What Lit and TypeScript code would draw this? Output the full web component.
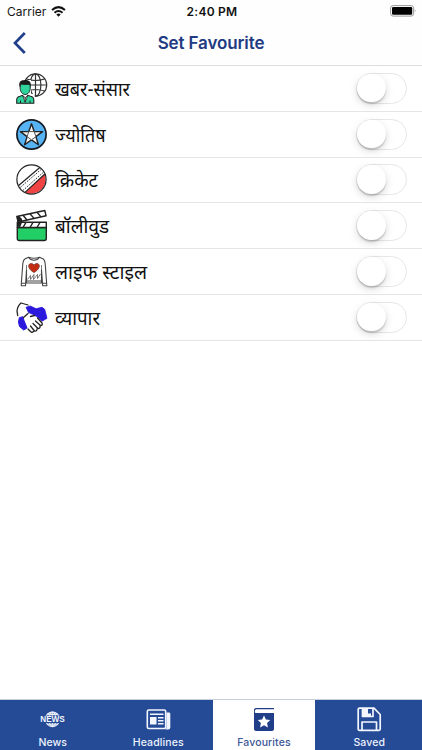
import { LitElement, html, css, svg } from "lit";
import { customElement, property } from "lit/decorators.js";

const globe = svg`
  <g fill="none" stroke="#333" stroke-width="1.2">
    <circle cx="19.5" cy="12" r="11.200"/>
    <ellipse cx="19.5" cy="12" rx="5.4" ry="11.200"/>
    <path d="M19.5 1v22M8.5 12h22M10.5 6q9 3 18 0M10.5 18q9-3 18 0"/>
  </g>
  <path d="M2.500 7h12.500v14h3.500l1 10H0V22z" fill="#fff"/>
  <path d="M4.200 11v4.500c0 3 2.200 6 5 6s5-3 5-6V11z" fill="#2fd39c" stroke="#222" stroke-width="1"/>
  <path d="M3.600 14c-1-4.500.4-6.800 3.900-6.800 4.200-1 8.200.4 7.200 6.800l-1.200-2.200c-3 .2-6-.2-8.500-.6z" fill="#1c1c1c"/>
  <path d="M.7 30.300V27q0-3 3.300-3.700L6.500 22.300l2.700 3 2.700-3 2.600 1q3.300.7 3.300 3.700v3.300z" fill="#2fd39c" stroke="#222" stroke-width="1.100"/>
  <path d="M6.900 23L9.200 29.500l2.300-6.500-2.300 1.800z" fill="#fff" stroke="#222" stroke-width=".7"/>
  <path d="M4.500 27.500v2.500M14 27.500v2.500M9.200 25v4" stroke="#222" fill="none"/>`;

const star = svg`
  <circle cx="15.500" cy="15.500" r="14.600" fill="#56b4f5" stroke="#141a22" stroke-width="1.700"/>
  <path d="M15.500 4.800L18.200 12.600H26.600L19.900 17.600 22.400 25.800 15.500 20.900 8.600 25.800 11.100 17.600 4.400 12.600H12.800z" fill="#f4f4f4" stroke="#222" stroke-width="1.400" stroke-linejoin="round"/>
  <path d="M12.800 12.600h5.400l1.700 5-4.400 3.300-4.400-3.300z" fill="#fff" stroke="#444" stroke-width=".9"/>`;

const ball = svg`
  <circle cx="15.500" cy="15.500" r="14.600" fill="#fff"/>
  <path d="M28.800 10A14.600 14.600 0 0 1 9 28.400z" fill="#f04343"/>
  <g fill="none" stroke="#222" stroke-width="1.200">
    <circle cx="15.500" cy="15.500" r="14.600"/>
    <path d="M23.800 3.500L2.300 21.800M28.900 10L9 28.400"/>
    <path d="M25.400 5.200L3.600 24M27.500 8.200L6.500 26.800" stroke-dasharray="1.700 1.200" stroke-width=".9"/>
  </g>`;

const clapper = svg`
  <g stroke="#222" stroke-width="1.400" stroke-linejoin="round">
    <path d="M1.300 17.500h29v11q0 2-2 2h-25q-2 0-2-2z" fill="#22cf66"/>
    <path d="M1.300 12.300h29v5.200h-29z" fill="#fff"/>
    <path d="M.8 6.500L28.800.5l1.300 5.300L2.200 12z" fill="#fff"/>
    <path d="M7 5.200l4 4.800M14 3.700l4 4.700M21 2.200l4 4.700M10 12.300l-3 5.200M17 12.300l-3 5.200M24 12.300l-3 5.200" fill="none"/>
  </g>
  <path d="M1 6.500L2.200 17h2l2-4.700L6 9 3 6z" fill="#222"/>`;

const sweater = svg`
  <g stroke="#444" stroke-width="1.100" stroke-linejoin="round" fill="#fff">
    <path d="M12.500 1.200L8.800 3Q7 4.300 6.700 9L5.300 28v1.800h4.200L10.500 14v13h15V14l1.200 15.800h4.100L29.300 9Q29 4.300 27.300 3L23.500 1.200q-5.500 2-11 0z"/>
    <path d="M12.500 1.200q2 3 5.500 3t5.500-3M5.300 27.300h4M26.700 27.300h4M10.500 25h15" fill="none"/>
    <path d="M10.500 14V9M25.500 14V9M11.500 23.500l3-4v4l3.500-5-.5 5 4-5v4l3-4.500" fill="none" stroke-width=".7"/>
  </g>
  <path d="M18 16.600C10.800 12.200 12 7.500 15.200 7.500q2 0 2.800 1.700.8-1.700 2.800-1.700c3.200 0 4.400 4.700-2.800 9.100z" fill="#c52d12" stroke="#74362f" stroke-width=".8"/>`;

const hands = svg`
  <path d="M10 5.300L14.300 4 20 6.700 26 5.300l2.700 2L31 16.300 26 19.200 21 14.700 16.700 12.300 12.500 10.500z" fill="#2a18dc" stroke="#2a18dc" stroke-width=".8" stroke-linejoin="round"/>
  <path d="M3.300 15.700L6.700 14.700 8 18.500 11 26 7.700 28 3.500 24.500 2.500 20z" fill="#2a18dc" stroke="#2a18dc" stroke-linejoin="round"/>
  <g fill="none" stroke="#222" stroke-width="1.300" stroke-linecap="round" stroke-linejoin="round">
    <path d="M1.700 13.500L1 9q.5-5 4-8L12 3"/>
    <path d="M7.500 15.500L12 11.500M14.500 14.500l4-1M21.500 16l4.500 5q1 2.500-1.500 2.500L19.500 19M24 24q.5 2.500-2 2.500l-5-5M21 27q0 2.500-2.500 2l-4-5M17.500 29.500q-1.500 1.500-3 0L12 27"/>
  </g>`;

const rows = [
  { label: "खबर-संसार", icon: globe, width: 75 },
  { label: "ज्योतिष", icon: star, width: 50.5 },
  { label: "क्रिकेट", icon: ball, width: 43 },
  { label: "बॉलीवुड", icon: clapper, width: 54 },
  { label: "लाइफ स्टाइल", icon: sweater, width: 92 },
  { label: "व्यापार", icon: hands, width: 45 },
];

const newsIcon = svg`
  <g fill="none" stroke="#e5ebf8" stroke-width="1.300">
    <circle cx="12.500" cy="12.300" r="7.200"/>
    <ellipse cx="12.500" cy="12.300" rx="3.500" ry="7.200"/>
    <path d="M12.500 5v14.500M7 7.500h11M7 17.200h11"/>
  </g>
  <path d="M0 8.700h25v7.400H0z" fill="#254b96"/>
  <text x="12.500" y="15.300" text-anchor="middle" fill="#f3f6ff" font-family="Liberation Sans, sans-serif" font-weight="700" letter-spacing="0" font-size="8.200">NEWS</text>`;

const paperIcon = svg`
  <rect x="1.300" y="3" width="18.400" height="18.500" rx="1.500" fill="none" stroke="#f3f6ff" stroke-width="1.600"/>
  <path d="M20.500 5.500H23q1.300 0 1.300 1.300V20.500q0 2-2 2H17.500q3 0 3-2z" fill="#f3f6ff"/>
  <path d="M4 10h6.500v7.500H4z" fill="#f3f6ff"/>
  <path d="M4 7.200h13.500M12 10.700h5.500M12 13.700h5.500M12 16.700h5.500" stroke="#f3f6ff" stroke-width="1.500"/>`;

const bookIcon = svg`
  <path d="M22 1H4Q2 1 2 3v19q0 2 2 2h16q2 0 2-2V6H4Q2.800 6 2.800 4.500T4 2.300h18z" fill="#213f88"/>
  <path d="M12 8.500l1.900 4 4.300.6-3.100 3 .8 4.300-3.900-2.100-3.900 2.100.8-4.300-3.100-3 4.300-.6z" fill="#fff"/>`;

const diskIcon = svg`
  <g fill="none" stroke="#f3f6ff" stroke-width="1.700" stroke-linejoin="round">
    <path d="M2.500 1.200H17L23.200 7.500V22q0 1.300-1.300 1.300H2.500q-1.300 0-1.300-1.300V2.500q0-1.300 1.300-1.300z"/>
    <path d="M5.500 1.500V9.500h10.500V1.500M5 23v-8h14.500V23"/>
  </g>
  <path d="M5.500 1.200h5.500V6.500h3V9H5.500z" fill="#f3f6ff"/>`;

const tabs = [
  { label: "News", icon: newsIcon },
  { label: "Headlines", icon: paperIcon },
  { label: "Favourites", icon: bookIcon, active: true },
  { label: "Saved", icon: diskIcon },
];

@customElement("toggle-switch")
export class ToggleSwitch extends LitElement {
  @property({ type: Boolean, reflect: true }) on = false;
  static styles = css`
    :host { display: block; width: 51px; height: 31px; box-sizing: border-box; border: 1.5px solid #e7e7e7; border-radius: 16px; background: #fff; }
    .knob { width: 28.500px; height: 28.500px; border-radius: 50%; background: #fff; box-shadow: 0 3px 8px rgba(0,0,0,.15), 0 2px 1.500px rgba(0,0,0,.17); }
    :host([on]) .knob { margin-left: 20px; }
  `;
  render() { return html`<div class="knob"></div>`; }
}

@customElement("app-root")
export class AppRoot extends LitElement {
  static styles = css`
    :host { display: flex; flex-direction: column; width: 422px; height: 750px; overflow: hidden; background: #fff; font-family: Inter, "Liberation Sans", sans-serif; }
    .status { display: grid; grid-template-columns: 1fr auto 1fr; align-items: center; height: 22px; padding: 0 5px 0 7px; box-sizing: border-box; font-size: 12px; color: #161616; background: #fefefe; }
    .carrier { display: flex; align-items: center; gap: 5px; letter-spacing: 0; }
    .time { font-weight: 600; letter-spacing: .25px; color: #111; }
    .battery { justify-self: end; }
    .nav { display: grid; grid-template-columns: 60px 1fr 60px; align-items: center; height: 44px; box-sizing: border-box; border-bottom: 1px solid #dedede; background: #fefefe; }
    .back { margin: 0 0 1px 12px; }
    .title { text-align: center; color: #213a82; font-weight: 600; font-size: 17px; letter-spacing: -.12px; padding-bottom: 1px; }
    .row { display: flex; align-items: center; height: 45.8px; box-sizing: border-box; border-bottom: 1px solid #e6e6e6; padding: 0 15px 0 16px; }
    .icon { flex: none; overflow: visible; }
    .name { flex: 1; margin-left: 8px; height: 31px; overflow: visible; fill: #111; font-size: 19.500px; font-family: "Noto Sans Devanagari", "Noto Sans", "Liberation Sans", sans-serif; }
    .fill { flex: 1; }
    .tabs { display: grid; grid-template-columns: repeat(4, 1fr); height: 51px; background: #254b96; border-top: 1px solid #c7cfdf; box-sizing: border-box; }
    .tab { display: flex; flex-direction: column; align-items: center; padding-top: 7px; color: #edf2ff; font-size: 10.500px; font-weight: 500; line-height: 14px; letter-spacing: .1px; gap: 4px; }
    .glyph { overflow: visible; }
    .active { margin: 0 1.500px 0 2px; background: #fff; color: #3c5698; }
  `;

  render() {
    return html`
      <div class="status">
        <div class="carrier">Carrier
          <svg width="15" height="11" viewBox="0 0 15 11" fill="none" stroke="#111" stroke-width="2">
            <path d="M1 4Q7.500-1.800 14 4M3.500 6.700q4-3.400 8 0"/>
            <path d="M5.300 8.500q2.200-1.800 4.400 0L7.500 10.800z" fill="#111" stroke="none"/>
          </svg>
        </div>
        <div class="time">2:40 PM</div>
        <svg class="battery" width="27" height="12" viewBox="0 0 27 12">
          <rect x=".6" y=".6" width="23" height="10.500" rx="2.500" fill="#fff" stroke="#999"/>
          <rect x="2" y="2" width="20.200" height="7.700" rx="1.200" fill="#000"/>
          <path d="M24.800 4q1.700 1.800 0 3.600z" fill="#999"/>
        </svg>
      </div>
      <div class="nav">
        <svg class="back" width="15" height="22" viewBox="0 0 15 22" fill="none" stroke="#213f8c" stroke-width="2.700"><path d="M12.800 1L3 11l9.800 10"/></svg>
        <div class="title">Set Favourite</div>
      </div>
      ${rows.map((r) => html`
        <div class="row">
          <svg class="icon" width="31" height="31" viewBox="0 0 31 31">${r.icon}</svg>
          <svg class="name"><text x="0" y="22.500" textLength=${r.width} lengthAdjust="spacingAndGlyphs">${r.label}</text></svg>
          <toggle-switch></toggle-switch>
        </div>`)}
      <div class="fill"></div>
      <div class="tabs">
        ${tabs.map((t) => html`
          <div class="tab ${t.active ? "active" : ""}">
            <svg class="glyph" width="25" height="25" viewBox="0 0 25 25">${t.icon}</svg>
            <span>${t.label}</span>
          </div>`)}
      </div>`;
  }
}
